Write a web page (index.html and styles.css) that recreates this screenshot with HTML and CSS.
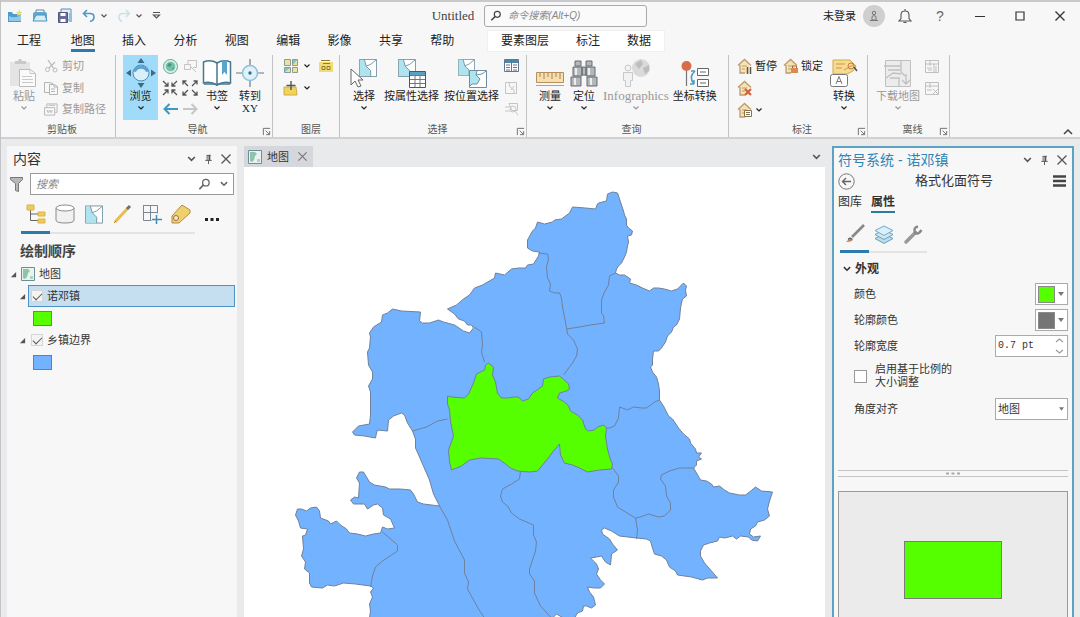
FILE: index.html
```
<!DOCTYPE html>
<html lang="zh-CN">
<head>
<meta charset="UTF-8" />
<meta name="viewport" content="width=device-width, initial-scale=1.0" />
<title>Untitled</title>
<link rel="stylesheet" href="styles.css">
</head>
<body>
<svg class="defs" width="0" height="0" aria-hidden="true">
  <symbol id="chev" viewBox="0 0 8 6"><path d="M1.5 1.5 4 4l2.5-2.5" fill="none" stroke="currentColor" stroke-width="1.2"/></symbol>
  <symbol id="close" viewBox="0 0 12 12"><path d="M1.500 1.500l9 9M10.500 1.500l-9 9" fill="none" stroke="currentColor" stroke-width="1.3"/></symbol>
  <symbol id="pin" viewBox="0 0 12 12"><path d="M4 1.500h4.500M4.500 1.500v5M2.500 7h7M6 7v4" fill="none" stroke="currentColor"/><path d="M6 1h2v6H6z" fill="currentColor"/></symbol>
  <symbol id="glass" viewBox="0 0 14 14"><circle cx="8.500" cy="5" r="3.500" fill="none" stroke="currentColor" stroke-width="1.400"/><path d="M6 7.500 1.500 12" stroke="currentColor" stroke-width="1.800"/></symbol>
  <symbol id="launch" viewBox="0 0 10 10"><path d="M1.500 9V1.500H9M4 4l4 4M8.500 4.500v4h-4" fill="none" stroke="currentColor"/></symbol>
  <symbol id="mapthumb" viewBox="0 0 14 14"><path d="M.5.5h13v13H.5z" fill="#e9f2ee" stroke="#6c8e98"/><path d="M2 2h5l2 2-2 2-1 4-2 2-2-1z" fill="#8dc2ab"/><path d="M9 9h3v3H9z" fill="#a9d5c1"/></symbol>
  <symbol id="layer" viewBox="0 0 20 20"><path d="M.5.5h19v19H.5z" fill="#fff" stroke="#6f8f9e"/><path d="M1 1h5l2 7 5 5v6H1z" fill="#aee3ef"/><path d="M6 .5 8 8l5 5v6.500M8 8l5-2 6-5" fill="none" stroke="#6f8f9e"/></symbol>
  <symbol id="tri" viewBox="0 0 8 8"><path d="M7 1v6H1z" fill="#555"/></symbol>
  <symbol id="house" viewBox="0 0 16 16"><path d="M3 6v9h9V6L7.500 2z" fill="#f4e3b5"/><path d="M1 7.500 7.500 1.500 14 7.500M3 7v8h5" fill="none" stroke="#bf9a6c" stroke-width="1.300"/><path d="M5 8h5M5 11h3" stroke="#bf9a6c"/></symbol>
</svg>

<header class="titlebar">
  <div class="quick">
    <button aria-label="新建工程"><svg width="16" height="16" viewBox="0 0 16 16"><path d="M1 4h4l1 2h8v8H1z" fill="#4e9ccb"/><path d="M2 8q6 3 12-1v6H2z" fill="#8fcae8"/><path d="M12 1l1 2.500 2.500.5L13.500 6l.5 2-2-1-2 1 .5-2L9 4l2.500-.5z" fill="#eedc77"/></svg></button>
    <button aria-label="打开"><svg width="16" height="16" viewBox="0 0 16 16"><path d="M1 6q0-2 2-2h10q2 0 2 2v7H1z" fill="#5ea8d3"/><path d="M4 4V2h8v2" fill="none" stroke="#63859b"/><path d="M4 7h9l2 6H1z" fill="#d5edf7" stroke="#4b92bd"/></svg></button>
    <button aria-label="保存"><svg width="16" height="16" viewBox="0 0 16 16"><path d="M4 4V1h10v11h-3" fill="#e1f0f7" stroke="#5892b4"/><path d="M1.500 4.500h9v10h-9z" fill="#6d6e98" stroke="#51577f"/><path d="M3.500 5h5v3h-5zM3.500 11h5v3h-5z" fill="#fff"/><path d="M12 5h3v9h-3z" fill="#8cc2dc"/></svg></button>
    <button aria-label="撤消"><svg width="14" height="14" viewBox="0 0 14 14"><path d="M5 1 1.500 4.500 5 8M2 4.500h6q4 0 4 3.500t-4 4.500" fill="none" stroke="#4f98c6" stroke-width="1.600"/></svg></button>
    <button class="drop" aria-label="撤消列表"><svg width="8" height="6"><use href="#chev"/></svg></button>
    <button aria-label="重做"><svg width="14" height="14" viewBox="0 0 14 14"><path d="M9 1l3.500 3.500L9 8M12 4.500H6q-4 0-4 3.500t3 4.500" fill="none" stroke="#c9e0ec" stroke-width="1.600"/></svg></button>
    <button class="drop" aria-label="重做列表"><svg width="8" height="6"><use href="#chev"/></svg></button>
    <button aria-label="自定义快速访问"><svg width="9" height="8" viewBox="0 0 9 8"><path d="M1 .5h7M1.500 3 4.500 6l3-3z" fill="none" stroke="#555" stroke-width="1.200"/></svg></button>
  </div>
  <div class="project">
    <span class="latin">Untitled</span>
    <label class="command"><svg width="12" height="12"><use href="#glass"/></svg><input type="text" placeholder="命令搜索(Alt+Q)" aria-label="命令搜索"></label>
  </div>
  <div class="account">
    <a href="#" class="signin">未登录</a>
    <span class="avatar"><svg width="10" height="12" viewBox="0 0 10 12"><circle cx="5" cy="3" r="1.700" fill="none" stroke="#777"/><path d="M3 10V6.500q2-2 4 0V10zM1 10.500h8" fill="none" stroke="#777"/></svg></span>
    <button aria-label="通知"><svg width="14" height="15" viewBox="0 0 14 15"><path d="M1 12h12l-2-2.500V6q0-4-4-4T3 6v3.500zM5.500 13.500h3M7 0v2" fill="none" stroke="#555" stroke-width="1.100"/></svg></button>
    <button class="help">?</button>
    <button class="win" aria-label="最小化"><svg width="10" height="10" viewBox="0 0 10 10"><path d="M0 5.500h10" stroke="#333"/></svg></button>
    <button class="win" aria-label="最大化"><svg width="10" height="10" viewBox="0 0 10 10"><path d="M1 1h8v8H1z" fill="none" stroke="#333" stroke-width="1.200"/></svg></button>
    <button class="win" aria-label="关闭"><svg width="12" height="12"><use href="#close"/></svg></button>
  </div>
</header>

<nav class="tabs">
  <a href="#" class="first">工程</a>
  <div class="core">
    <a href="#" class="on">地图</a><a href="#">插入</a><a href="#">分析</a><a href="#">视图</a><a href="#">编辑</a><a href="#">影像</a><a href="#">共享</a><a href="#">帮助</a>
  </div>
  <div class="context"><a href="#">要素图层</a><a href="#">标注</a><a href="#">数据</a></div>
</nav>

<div class="ribbon">
  <section class="group clip off">
    <div class="tools">
      <button class="big"><svg width="30" height="30" viewBox="0 0 30 30"><path d="M1 4h20v24H1z" fill="#e4e4e4"/><path d="M6 3h3q0-2 2-2t2 2h4v3H6z" fill="#c9c9c9"/><path d="M10.500 11.500h11l5 4v13h-16z" fill="#fafafa" stroke="#bbb"/><path d="M21 11.500v4h5M13 18.500h10M13 21.500h11M13 24.500h11" fill="none" stroke="#c9c9c9"/></svg>粘贴<svg width="8" height="6"><use href="#chev"/></svg></button>
      <div class="stack">
        <button><svg width="14" height="14" viewBox="0 0 14 14"><path d="M4 1l6 9M11 3 5 9" stroke="#bbb" stroke-width="1.300"/><circle cx="3.500" cy="10.500" r="2" fill="none" stroke="#bbb"/><circle cx="11" cy="11" r="2" fill="none" stroke="#bbb"/></svg>剪切</button>
        <button><svg width="14" height="14" viewBox="0 0 14 14"><path d="M5 1.500H.5v10H5M5.500 3.500h5l3 2v8h-8zM10 4v2h3M7 8h4M7 10.500h4M5 1.500l4 1" fill="none" stroke="#b5b5b5"/></svg>复制</button>
        <button><svg width="15" height="15" viewBox="0 0 15 15"><path d="M3 5V1.500h11v9h-2M.5 5.500h11v8H.5zM3 8l1.500 3L6 8l1.500 3L9 8M5 3h7" fill="none" stroke="#b5b5b5"/></svg>复制路径</button>
      </div>
    </div>
    <h2>剪贴板</h2>
  </section>
  <section class="group navi">
    <div class="tools">
      <button class="big active"><svg width="30" height="30" viewBox="0 0 30 30"><path d="M15 0l3.500 5h-7zM15 30l3.500-5h-7zM0 15l5-3.500v7zM30 15l-5-3.500v7z" fill="#3e6a89"/><circle cx="15" cy="15" r="8" fill="#d9f0fa" stroke="#4c8cb5"/><path d="M7.500 13q0-2 2-4q5.500-3 11 0q2 2 2 4q-1 1-2.500 1a5.500 5.500 0 0 0-10 0q-1.500 0-2.500-1z" fill="#5ba4d2"/></svg>浏览<svg width="8" height="6"><use href="#chev"/></svg></button>
      <div class="pairs">
        <button aria-label="全图"><svg width="15" height="15" viewBox="0 0 15 15"><circle cx="7.500" cy="7.500" r="7" fill="#dff0eb" stroke="#5baa9a"/><circle cx="7.500" cy="7.500" r="4.800" fill="#79c0ab"/><path d="M6 4l3 1-2 3-3-1zM9 9l2-1-1 3z" fill="#3f9a82"/></svg></button>
        <button aria-label="缩放至所选"><svg width="15" height="15" viewBox="0 0 15 15"><path d="M5 1.500h8.500v7H10M1.500 5.500h6v5h-6zM8 8l5 5M5 5V1.500" fill="none" stroke="#c3c3c3"/></svg></button>
        <button aria-label="固定比例放大"><svg width="16" height="16" viewBox="0 0 16 16"><path d="M1 1l5 5M6 2.500V6H2.500M15 1l-5 5M10 2.500V6h3.500M1 15l5-5M6 13.500V10H2.500M15 15l-5-5M10 13.500V10h3.500" fill="none" stroke="#555" stroke-width="1.300"/></svg></button>
        <button aria-label="固定比例缩小"><svg width="16" height="16" viewBox="0 0 16 16"><path d="M1 1l5 5M1 4.500V1h3.500M15 1l-5 5M15 4.500V1h-3.500M1 15l5-5M1 11.500V15h3.500M15 15l-5-5M15 11.500V15h-3.500" fill="none" stroke="#555" stroke-width="1.300"/></svg></button>
        <button aria-label="上一视图"><svg width="15" height="12" viewBox="0 0 15 12"><path d="M6.500 1l-5 5 5 5M2 6h13" fill="none" stroke="#3f97c2" stroke-width="2"/></svg></button>
        <button aria-label="下一视图"><svg width="15" height="12" viewBox="0 0 15 12"><path d="M8.500 1l5 5-5 5M13 6H0" fill="none" stroke="#c6c6c6" stroke-width="2"/></svg></button>
      </div>
      <button class="big"><svg width="30" height="30" viewBox="0 0 30 30"><path d="M1.500 4q7-3 13.500 1 6.500-4 13.500-1v21q-7-2-13.500 2-6.500-4-13.500-2z" fill="#fff" stroke="#47788f" stroke-width="1.500"/><path d="M15 5v22M2 26h11l2 1 2-1h11" fill="none" stroke="#47788f" stroke-width="1.500"/><path d="M20 2.500h5V17l-2.500-3L20 17z" fill="#58a6ca"/></svg>书签<svg width="8" height="6"><use href="#chev"/></svg></button>
      <button class="big goto"><svg width="30" height="30" viewBox="0 0 30 30"><path d="M15 1v6M15 23v6M1 15h6M23 15h6" stroke="#777" stroke-width="1.200"/><circle cx="15" cy="15" r="7.500" fill="#dff2fa" stroke="#8dc0da" stroke-width="1.500"/><circle cx="15" cy="15" r="1.700" fill="#2f6f97"/></svg>转到<span class="latin">XY</span></button>
    </div>
    <h2>导航</h2><button class="launch" aria-label="导航选项"><svg width="9" height="9"><use href="#launch"/></svg></button>
  </section>
  <section class="group lay">
    <div class="tools">
      <div class="stack">
        <button><svg width="16" height="16" viewBox="0 0 16 16"><path d="M1.500 1.500h6v6h-6zM9.500 1.500h5v6h-5zM1.500 9.500h6v5h-6zM9.500 9.500h5v5h-5z" fill="#efe19a" stroke="#8a9c94"/><path d="M10 2h4l-4 5zM2 10h5l-5 4z" fill="#7fc3d3"/></svg><svg width="8" height="6"><use href="#chev"/></svg></button>
        <button><svg width="16" height="16" viewBox="0 0 16 16"><path d="M1 7h12l1 8H1z" fill="#f0d35a" stroke="#cfae45"/><path d="M8 1v9M3.500 5.500h9" stroke="#555" stroke-width="1.400"/></svg><svg width="8" height="6"><use href="#chev"/></svg></button>
      </div>
      <div class="stack">
        <button aria-label="添加图形图层"><svg width="16" height="16" viewBox="0 0 16 16"><path d="M1 4h14v10H1z" fill="#f2db72"/><path d="M3 2.500h9M4 8.500h3v3H4zM9 8.500h3v3H9zM5 5.500h7" fill="none" stroke="#8f7f36"/></svg></button>
      </div>
    </div>
    <h2>图层</h2>
  </section>
  <section class="group sel">
    <div class="tools">
      <button class="big"><svg width="30" height="30" viewBox="0 0 30 30"><use href="#layer" x="10" y="1" width="18" height="18"/><path d="M2 11v16l4-4 3 6 3-1-3-6h5z" fill="#fff" stroke="#666"/></svg>选择<svg width="8" height="6"><use href="#chev"/></svg></button>
      <button class="big"><svg width="30" height="30" viewBox="0 0 30 30"><use href="#layer" x="1" y="1" width="18" height="18"/><path d="M12.500 13.500h16v16h-16z" fill="#fff" stroke="#555"/><path d="M13 14h15v3H13z" fill="#5ba0c4"/><path d="M13 17.500h15M13 21.500h15M13 25.500h15M18 17v12M23 17v12" stroke="#777"/></svg>按属性选择</button>
      <button class="big"><svg width="30" height="30" viewBox="0 0 30 30"><use href="#layer" x="1" y="1" width="17" height="17"/><path d="M12.500 12.500h17v17h-17z" fill="#fff" stroke="#6f8f9e"/><path d="M13 13h7l-1 4 4 4-3 5h-5l-2 2z" fill="#aee3ef"/><path d="M20 13l-1 4 4 4-3 5h-5l-2 2M19 17l6-1 4-3" fill="none" stroke="#6f8f9e"/></svg>按位置选择</button>
      <div class="stack">
        <button aria-label="属性"><svg width="15" height="13" viewBox="0 0 15 13"><path d="M.5.5h14v12H.5z" fill="#fff" stroke="#64748a"/><path d="M1 1h13v3H1z" fill="#4e84a5"/><path d="M7.500 1v11M2 6h4M9 6h4M2 8.500h4M9 8.500h4M2 11h4M9 11h4" stroke="#64748a"/></svg></button>
        <button aria-label="清除"><svg width="14" height="14" viewBox="0 0 14 14"><path d="M1.500 1.500h11v11h-11zM5 2l1 4 4 3v3M7 9l3-4" fill="none" stroke="#c5c5c5"/></svg></button>
        <button aria-label="缩放至"><svg width="15" height="15" viewBox="0 0 15 15"><path d="M5 1.500h8.500v7H8zM1 5h6M1 9h5" fill="none" stroke="#c5c5c5"/><circle cx="9" cy="7" r="3" fill="none" stroke="#c5c5c5"/><path d="M11 9l3 4" stroke="#c5c5c5"/></svg></button>
      </div>
    </div>
    <h2>选择</h2><button class="launch" aria-label="选择选项"><svg width="9" height="9"><use href="#launch"/></svg></button>
  </section>
  <section class="group query">
    <div class="tools">
      <button class="big"><svg width="30" height="30" viewBox="0 0 30 30"><path d="M1.500 14.500h27v10h-27z" fill="#f6e0ae" stroke="#b78e5e"/><path d="M5 15v4M9 15v6M13 15v4M17 15v6M21 15v4M25 15v6" stroke="#a8825a"/><path d="M1 27.500h28" stroke="#83b0c6"/></svg>测量<svg width="8" height="6"><use href="#chev"/></svg></button>
      <button class="big"><svg width="30" height="30" viewBox="0 0 30 30"><path d="M6 3h6v5H6zM17 3h6v5h-6zM4 9h9v9H4zM17 9h9v9h-9zM2 19h10v9H2zM18 19h10v9H18zM13 9h4v8h-4z" fill="#b4b8bb" stroke="#666b70"/><path d="M6 20v7M22 20v7M7 10v7M20 10v7" stroke="#eee" stroke-width="2"/></svg>定位<svg width="8" height="6"><use href="#chev"/></svg></button>
      <button class="big off info"><svg width="30" height="30" viewBox="0 0 30 30"><circle cx="20" cy="10" r="9" fill="#dadada"/><path d="M14 6l6-4 2 4-4 5zM22 10l6-3v6l-4 3z" fill="#bdbdbd"/><circle cx="7" cy="10" r="3" fill="#f2f2f2" stroke="#c8c8c8"/><path d="M2.500 14.500h9v8h-2v6h-5v-6h-2z" fill="#f2f2f2" stroke="#c8c8c8"/></svg><span class="latin">Infographics</span><svg width="8" height="6"><use href="#chev"/></svg></button>
      <button class="big"><svg width="30" height="30" viewBox="0 0 30 30"><path d="M6.500 10v18" stroke="#777" stroke-width="1.200"/><circle cx="6.500" cy="8" r="5" fill="#d96c4a"/><path d="M17.500 10.500h11v7h-11zM17.500 21.500h11v7h-11zM20 14h6M20 25h6" fill="#fff" stroke="#666"/><path d="M15 13q-7 6-1 13M15 13l-4 0M14 26v-4M14 26h-4" fill="none" stroke="#4a9bc6" stroke-width="1.500"/></svg>坐标转换</button>
    </div>
    <h2>查询</h2>
  </section>
  <section class="group label">
    <div class="tools">
      <div class="houses">
        <button><svg width="16" height="16"><use href="#house"/><path d="M10.500 9v7M13.500 9v7" stroke="#555" stroke-width="1.500"/></svg>暂停</button>
        <button><svg width="16" height="16"><use href="#house"/><path d="M8 10h7v5H8z" fill="#d98a4e"/><path d="M9.500 10V8h4v2" fill="none" stroke="#a06a3e"/></svg>锁定</button>
        <button aria-label="查看未放置的"><svg width="16" height="16"><use href="#house"/><path d="M8 9l6 6M14 9l-6 6" stroke="#d65b3c" stroke-width="2"/></svg></button>
        <span></span>
        <button aria-label="更多标注"><svg width="16" height="16"><use href="#house"/><path d="M7.500 8.500h7v6h-7zM9 10.500h4M9 12.500h4" fill="#fff" stroke="#80714f"/></svg><svg width="8" height="6"><use href="#chev"/></svg></button>
      </div>
      <button class="big"><svg width="30" height="30" viewBox="0 0 30 30"><path d="M4 2h17l6 6-3 5-6 3H4z" fill="#f6dc8d" stroke="#d1a94f"/><path d="M7 6h9M7 10h6M15 12l9-5" stroke="#cf8f62"/><circle cx="22" cy="8" r="3" fill="none" stroke="#d0754b"/><path d="M25 9l3 4" stroke="#555" stroke-width="1.500"/><rect x="1.500" y="16.500" width="17" height="12" rx="2" fill="#fff" stroke="#777"/><path d="M7 26l3-7.500 3 7.500M8 23.500h4" fill="none" stroke="#777"/></svg>转换<svg width="8" height="6"><use href="#chev"/></svg></button>
    </div>
    <h2>标注</h2><button class="launch" aria-label="标注选项"><svg width="9" height="9"><use href="#launch"/></svg></button>
  </section>
  <section class="group offline off">
    <div class="tools">
      <button class="big"><svg width="30" height="30" viewBox="0 0 30 30"><path d="M2.500 2.500h25v26h-25z" fill="#ececec" stroke="#c0c0c0"/><path d="M1 8h17M5 12h12M18 3v11l4 4M3 20l7-5 8 1M7 20h9v8M23 16v10M19 22l4 4 4-4" fill="none" stroke="#c0c0c0" stroke-width="1.300"/></svg>下载地图<svg width="8" height="6"><use href="#chev"/></svg></button>
      <div class="stack">
        <button aria-label="同步"><svg width="15" height="15" viewBox="0 0 15 15"><path d="M.5 1.500h13v12H.5zM1 5h12M5 2v5M9 5v8M2 9h5M11 7v6M3 11h4" fill="none" stroke="#bfbfbf"/></svg></button>
        <button aria-label="移除"><svg width="15" height="15" viewBox="0 0 15 15"><path d="M.5 1.500h13v12H.5zM1 5h12M5 2v5M2 9h5M8 8l5 5M13 8l-5 5" fill="none" stroke="#bfbfbf"/></svg></button>
      </div>
    </div>
    <h2>离线</h2><button class="launch" aria-label="离线选项"><svg width="9" height="9"><use href="#launch"/></svg></button>
  </section>
  <button class="collapse" aria-label="折叠功能区"><svg width="10" height="7" viewBox="0 0 10 7"><path d="M1 6l4-4 4 4" fill="none" stroke="#444" stroke-width="1.500"/></svg></button>
</div>

<main class="workspace">
  <aside class="contents">
    <div class="panehead"><h1>内容</h1><span class="paneicons"><button aria-label="菜单"><svg width="11" height="8"><use href="#chev"/></svg></button><button aria-label="固定"><svg width="11" height="11"><use href="#pin"/></svg></button><button aria-label="关闭"><svg width="12" height="12"><use href="#close"/></svg></button></span></div>
    <div class="find">
      <svg width="13" height="15" viewBox="0 0 13 15"><path d="M.5.5h12v2l-4 4v8l-3-1V6.500l-5-4z" fill="#b8b8b8" stroke="#777"/></svg>
      <label class="findbox"><input type="text" placeholder="搜索" aria-label="搜索"><svg width="13" height="13"><use href="#glass"/></svg><svg width="10" height="8"><use href="#chev"/></svg></label>
    </div>
    <div class="views">
      <button class="on" aria-label="按绘制顺序列出"><svg width="20" height="20" viewBox="0 0 20 20"><path d="M4.500 6v10.500H13M4.500 10H13" fill="none" stroke="#666"/><path d="M1 1h7v5H1zM12 8h7v4h-7zM12 15h7v4h-7z" fill="#efcb5a" stroke="#d9b54a"/></svg></button>
      <button aria-label="按数据源列出"><svg width="20" height="20" viewBox="0 0 20 20"><path d="M1 4v12q0 3 9 3t9-3V4" fill="#f1f1f1" stroke="#8b8b8b"/><ellipse cx="10" cy="4" rx="9" ry="3" fill="#fff" stroke="#8b8b8b"/></svg></button>
      <button aria-label="按选择列出"><svg width="18" height="19"><use href="#layer"/></svg></button>
      <button aria-label="按编辑列出"><svg width="20" height="20" viewBox="0 0 20 20"><path d="M2 18 14.500 4.500" stroke="#e7bd4f" stroke-width="3"/><path d="M14 5l3-3" stroke="#776d65" stroke-width="3"/><path d="M1 19l2-2" stroke="#a88244"/></svg></button>
      <button aria-label="按捕捉列出"><svg width="20" height="20" viewBox="0 0 20 20"><path d="M1 1.500h14.500v8M1.500 1v15.500h8M8.500 1v15M1 8.500h15" fill="none" stroke="#7b8794"/><path d="M14.500 11v9M10 15.500h10" stroke="#3f8eb5" stroke-width="1.500"/></svg></button>
      <button aria-label="按标注列出"><svg width="20" height="20" viewBox="0 0 20 20"><path d="M1 12 11 1l8 5v3L8 19H1z" fill="#efd06d" stroke="#b28b4b"/><circle cx="5" cy="14" r="2.500" fill="#f8eac0" stroke="#a66a4a"/></svg></button>
      <button class="more" aria-label="更多"><svg width="16" height="4" viewBox="0 0 16 4"><path d="M1 1h3v3H1zM6.500 1h3v3h-3zM12 1h3v3h-3z" fill="#222"/></svg></button>
    </div>
    <h3>绘制顺序</h3>
    <ul class="tree">
      <li><svg width="7" height="7"><use href="#tri"/></svg><svg width="14" height="14"><use href="#mapthumb"/></svg>地图</li>
      <li class="sub"><svg width="7" height="7"><use href="#tri"/></svg><label class="picked"><input type="checkbox" checked>诺邓镇</label></li>
      <li class="leaf"><span class="swatch green"></span></li>
      <li class="sub"><svg width="7" height="7"><use href="#tri"/></svg><label><input type="checkbox" checked>乡镇边界</label></li>
      <li class="leaf"><span class="swatch blue"></span></li>
    </ul>
  </aside>

  <section class="view">
    <div class="doctabs"><div class="doctab"><svg width="14" height="14"><use href="#mapthumb"/></svg>地图<button aria-label="关闭地图"><svg width="11" height="11"><use href="#close"/></svg></button></div><button aria-label="视图列表"><svg width="11" height="8"><use href="#chev"/></svg></button></div>
    <svg class="map" viewBox="244 167 582 450" preserveAspectRatio="xMidYMin slice">
      <g stroke="#6f819b" stroke-width="1" stroke-linejoin="round" fill="none">
        <path fill="#73b2ff" d="M608 194L613 192 618 193 620 199 622 205 624 211 625 215 627 219 627 225 629 228 633 231 632 235 628 236 629 242 628 246 627 252 625 257 622 263 619 266 617 269 616 273 620 275 625 275 631 279 630 283 637 285 643 288 650 291 654 288 659 288 665 289 672 291 678 289 680 287 684 283 687 286 686 290 687 296 683 299 682 303 681 308 680 319 677 325 674 327 672 332 668 336 666 342 662 348 659 351 654 351 653 359 653 365 651 367 653 372 657 377 659 384 660 391 660 400 664 406 669 416 673 419 679 428 684 434 690 439 691 443 696 449 697 453 702 453 699 457 702 459 697 461 697 465 694 468 697 473 701 480 707 481 712 484 714 487 720 486 725 490 730 493 740 495 746 495 750 492 756 487 762 491 773 492 770 501 768 509 770 516 765 520 758 522 756 526 751 529 750 534 754 537 761 536 758 541 752 540 749 537 741 536 737 539 733 536 725 538 720 537 718 541 710 543 704 545 701 551 701 556 705 563 712 571 718 578 708 578 703 580 692 577 678 575 676 571 670 567 667 560 662 556 655 554 653 548 651 541 647 539 637 538 620 536 612 531 605 528 602 530 603 534 610 539 613 544 618 550 612 554 611 565 606 562 602 556 597 557 591 558 597 564 599 569 597 574 601 580 605 584 601 588 595 588 588 587 590 592 594 597 596 605 592 608 587 606 584 606 583 611 578 613 575 618 L564 618 557 614 553 618 L370 618 371 611 370 604 373 597 371 592 374 588 371 586 356 584 344 583 335 586 328 585 323 588 312 587 310 583 310 573 305 569 306 562 302 556 304 549 303 536 306 535 308 529 301 528 299 521 296 515 298 509 302 509 307 511 311 508 317 507 320 511 321 518 329 521 331 524 337 521 341 525 347 529 350 533 358 534 366 536 374 534 381 533 383 527 388 529 395 528 391 519 384 515 383 508 378 504 374 505 368 509 365 504 354 504 351 500 355 497 359 498 360 483 357 478 360 472 364 472 370 482 375 485 386 487 390 489 401 489 411 490 414 494 418 502 424 504 440 506 434 494 430 480 420 457 416 448 416 439 413 431 408 423 405 415 402 413 394 416 389 420 388 431 378 430 377 433 376 438 365 436 355 435 353 432 359 426 370 424 371 415 371 410 371 392 369 386 373 379 373 372 369 365 368 352 370 348 371 337 370 333 374 327 382 322 383 315 388 313 393 309 402 311 421 312 420 321 423 323 430 323 439 320 444 322 455 325 464 331 470 333 474 328 472 325 468 325 465 321 459 319 455 314 448 309 457 305 464 299 470 295 475 288 483 285 495 278 496 273 505 275 512 269 519 268 526 268 528 265 534 264 539 256 540 252 533 251 528 248 528 240 533 231 536 228 538 222 545 224 553 222 555 220 562 219 570 213 573 207 586 208 596 209 598 204 599 203 607 201z"/>
        <path d="M539 253L548 254 549 259 547 267 548 278 551 284 550 291 555 293 560 293 562 298 563 307 565 317 567 328 568 334 574 340 578 349 577 356 573 363 564 375M567 329L580 327 591 325 605 323 604 316 602 313 602 300 605 292 609 285 610 276 616 273M475 327L482 332 483 345 482 352 485 362M660 400L655 402 647 408 642 408 634 407 628 410 623 408 620 407 619 418 615 426 610 428 605 428M695 468L680 468 670 471 662 475 661 479 666 486 667 496 671 503 671 510 665 516 659 517 649 514 641 517 636 518 626 512 618 507 614 497 614 490 619 482 619 476 613 468M636 518L638 530 637 539M521 471L520 479 512 484 503 489 501 496 503 502 508 506 512 513 520 519 534 525 534 535 537 542 536 551 530 569 530 574 535 581 535 593 541 606 552 618M448 419L438 421 427 427 413 431M440 506L448 520 455 541 465 560 465 573 469 582 468 589 479 609 485 618M383 532L390 538 398 545 398 551 383 561 376 567 373 576 371 587"/>
        <path fill="#55ff00" d="M448 396L452 397 465 398 469 394 474 383 477 374 485 370 486 365 489 363 494 367 493 375 496 382 498 393 502 398 508 398 515 397 519 397 523 401 529 399 533 393 539 389 543 386 544 379 550 377 560 376 565 380 569 384 570 389 567 391 560 393 558 398 565 402 569 406 571 411 578 415 583 420 586 429 589 431 595 430 598 427 604 425 607 428 606 436 608 449 611 460 613 464 612 469 600 470 588 472 580 468 573 465 565 463 561 455 560 444 554 451 548 459 543 465 538 471 530 472 518 471 511 468 506 464 499 459 481 458 470 460 462 466 452 470 450 462 449 450 454 436 451 422 450 410 448 404z"/>
      </g>
    </svg>
  </section>

  <aside class="symbology">
    <div class="panehead"><h1>符号系统 - 诺邓镇</h1><span class="paneicons"><button aria-label="菜单"><svg width="11" height="8"><use href="#chev"/></svg></button><button aria-label="固定"><svg width="11" height="11"><use href="#pin"/></svg></button><button aria-label="关闭"><svg width="12" height="12"><use href="#close"/></svg></button></span></div>
    <div class="format"><button aria-label="返回"><svg width="17" height="17" viewBox="0 0 17 17"><circle cx="8.500" cy="8.500" r="7.700" fill="none" stroke="#777"/><path d="M8 5 4.500 8.500 8 12M5 8.500h8" fill="none" stroke="#666" stroke-width="1.400"/></svg></button><span>格式化面符号</span><button aria-label="选项"><svg width="13" height="12" viewBox="0 0 13 12"><path d="M0 1.500h13M0 6h13M0 10.500h13" stroke="#444" stroke-width="2.500"/></svg></button></div>
    <div class="symtabs"><a href="#">图库</a><a href="#" class="on">属性</a></div>
    <div class="parts">
      <button class="on" aria-label="符号"><svg width="20" height="20" viewBox="0 0 20 20"><path d="M7 13 19 1" stroke="#888" stroke-width="2.600"/><path d="M1 18q2-1 2-3 2-3 5 0 0 3-7 3z" fill="#bd8660"/><path d="M3 15q2-2 4 0" stroke="#555" fill="none"/></svg></button>
      <button aria-label="图层"><svg width="20" height="20" viewBox="0 0 20 20"><path d="M10 9l9 4.500-9 5-9-5z" fill="#b7dff0" stroke="#6e9db6"/><path d="M10 5l9 4.500-9 5-9-5z" fill="#cfeaf6" stroke="#6e9db6"/><path d="M10 1l9 4.500-9 5-9-5z" fill="#d9eff9" stroke="#6fa9c8"/></svg></button>
      <button aria-label="结构"><svg width="20" height="20" viewBox="0 0 20 20"><path d="M3 17 12.500 7.500" stroke="#999" stroke-width="3.500" stroke-linecap="round"/><path d="M15 1.500q-5 1-3 6 3 3 6.500-2.500" fill="none" stroke="#888" stroke-width="2.500"/></svg></button>
    </div>
    <h4><svg width="10" height="8"><use href="#chev"/></svg>外观</h4>
    <div class="fields">
      <div class="field"><span id="fill">颜色</span><button class="color" aria-labelledby="fill"><span class="chip green"></span><svg width="6" height="4" viewBox="0 0 6 4"><path d="M0 0h6L3 4z" fill="#777"/></svg></button></div>
      <div class="field"><span id="line">轮廓颜色</span><button class="color" aria-labelledby="line"><span class="chip gray"></span><svg width="6" height="4" viewBox="0 0 6 4"><path d="M0 0h6L3 4z" fill="#777"/></svg></button></div>
      <div class="field"><label for="width">轮廓宽度</label><span class="spin"><input id="width" type="text" value="0.7 pt"><svg width="9" height="18" viewBox="0 0 9 18"><path d="M1 5l3.500-3L8 5M1 13l3.500 3L8 13" fill="none" stroke="#999" stroke-width="1.200"/></svg></span></div>
      <label class="scale"><input type="checkbox"><span>启用基于比例的<br>大小调整</span></label>
      <div class="field"><label for="angle">角度对齐</label><span class="pick"><select id="angle"><option>地图</option></select><svg width="5" height="4" viewBox="0 0 6 4"><path d="M0 0h6L3 4z" fill="#777"/></svg></span></div>
    </div>
    <div class="splitter"><svg width="16" height="3" viewBox="0 0 16 3"><path d="M1 1.500h3M6.500 1.500h3M12 1.500h3" stroke="#aaa" stroke-width="2"/></svg></div>
    <div class="preview"><div class="patch"></div></div>
  </aside>
</main>
</body>
</html>
```

FILE: styles.css
```
*{box-sizing:border-box;}
body{margin:0;height:100vh;display:flex;flex-direction:column;overflow:hidden;background:#f7f7f7;border-top:2px solid #c9c9cb;border-left:1px solid #c4c4c6;font:11px/14px "Liberation Sans","Noto Sans CJK SC",sans-serif;color:#333;}
button{display:flex;align-items:center;justify-content:center;padding:0;border:0;background:none;font:inherit;color:inherit;white-space:nowrap;}
a{color:inherit;text-decoration:none;}
svg{display:block;flex:none;}
h1,h2,h3,h4,ul{margin:0;padding:0;font-weight:normal;}
input,select{font:inherit;color:inherit;min-width:0;}
.defs{position:absolute;}
.latin{font-family:"Liberation Serif",serif;}

.titlebar{display:grid;grid-template-columns:1fr auto 1fr;align-items:center;height:28px;padding:0 12px 0 6px;flex:none;}
.quick{display:flex;align-items:center;gap:9px;color:#555;}
.quick .drop{margin-left:-5px;}
.project{display:flex;align-items:center;gap:10px;padding-left:4px;font-size:13px;color:#444;}
.command{display:flex;align-items:center;gap:6px;width:163px;height:22px;padding:0 5px;border:1px solid #a9a9ab;border-radius:3px;background:#fafafa;}
.command input{width:130px;padding:0;border:0;outline:0;background:none;font-size:10px;font-style:italic;}
input::placeholder{color:#888;opacity:1;}
.account{display:flex;align-items:center;justify-content:flex-end;}
.signin{margin-right:7px;color:#222;}
.avatar{display:flex;align-items:center;justify-content:center;width:22px;height:22px;margin-right:13px;border-radius:50%;background:#cfcfcf;}
.help{width:16px;margin:0 12px 0 20px;font-size:14px;color:#666;}
.win{width:40px;}
.win:last-child{width:16px;margin-left:12px;}

.tabs{display:flex;align-items:stretch;height:22px;flex:none;font-size:12px;color:#222;}
.tabs a{display:flex;align-items:center;justify-content:center;}
.tabs .first{width:56px;}
.core{display:grid;grid-template-columns:repeat(8,1fr);width:411px;}
.core .on{justify-self:center;border-bottom:3px solid #2d7aac;border-top:3px solid transparent;}
.context{display:flex;gap:27px;margin-left:19px;padding:0 13px;background:#fff;border:1px solid #f0f0f0;}

.ribbon{display:flex;height:87px;padding-top:3px;border-bottom:2px solid #d0d0d2;flex:none;}
.group{position:relative;display:flex;flex-direction:column;flex:none;border-right:1px solid #c2c2c2;color:#222;}
.group h2{margin-top:auto;font-size:10px;line-height:15px;text-align:center;color:#555;}
.tools{display:flex;height:65px;}
.big{flex-direction:column;justify-content:flex-start;padding-top:3px;height:65px;}
.big>svg:first-child{margin-bottom:1px;}
.big>svg:last-child:not(:first-child){margin-top:2px;}
.big .latin{font-size:13px;}
.goto .latin{font-size:11px;line-height:11px;}
.off,.off .big{color:#999;}
.active{width:35px;background:#a0dcfa;}
.stack{display:flex;flex-direction:column;}
.stack button{justify-content:flex-start;gap:4px;height:22px;}
.launch{position:absolute;right:1px;bottom:1px;color:#666;}
.clip{width:115px;padding-left:8px;}
.clip .tools{gap:5px;}
.clip .big{width:30px;}
.clip .stack svg{width:14px;}
.navi{width:157px;padding-left:7px;}
.navi .tools{gap:3px;}
.pairs{display:grid;grid-template-columns:18px 18px;grid-template-rows:22px 22px 20px;column-gap:2px;}
.lay{width:67px;padding-left:10px;}
.lay .tools{gap:7px;}
.sel{width:187px;padding-left:9px;}
.sel .tools{gap:5px;}
.query{width:202px;padding-left:8px;}
.query .tools{gap:4px;}
.label{width:139px;padding-left:8px;}
.label .tools{gap:4px;}
.houses{display:grid;grid-template-columns:42px 42px;grid-template-rows:22px 22px 22px;column-gap:4px;}
.houses button{justify-content:flex-start;gap:2px;}
.offline{width:82px;padding-left:8px;}
.offline .tools{gap:5px;}
.collapse{margin-left:auto;align-self:flex-end;padding:0 7px 2px 0;}

.workspace{display:flex;flex:1;min-height:0;gap:7px;padding:7px 6px 0;background:#e9eaec;}
.contents{display:flex;flex-direction:column;width:230px;flex:none;background:#f7f7f7;}
.panehead{display:flex;align-items:center;justify-content:space-between;height:26px;padding:0 5px 0 6px;flex:none;}
.panehead h1{font-size:14px;line-height:20px;color:#333;}
.paneicons{display:flex;align-items:center;gap:6px;color:#555;}
.find{display:flex;align-items:center;gap:7px;height:24px;padding:0 3px;}
.findbox{display:flex;flex:1;align-items:center;gap:8px;height:22px;padding:0 4px 0 5px;border:1px solid #999;background:#fff;color:#666;}
.findbox input{flex:1;padding:0;border:0;outline:0;font-style:italic;}
.views{display:flex;align-items:flex-start;height:38px;margin:7px 0 0 14px;}
.views button{width:29px;height:31px;padding-bottom:7px;border-bottom:2px solid #e3e3e3;}
.views .on,.parts .on{border-bottom:3px solid #2d7aac;}
.views .more{width:34px;padding-bottom:0;border:0;}
.contents h3{height:20px;margin:0 0 2px 13px;font-size:14px;line-height:20px;font-weight:bold;color:#444;}
.tree{list-style:none;}
.tree li{display:flex;align-items:center;gap:4px;height:22px;padding:0 2px 0 3px;}
.tree .sub{padding-left:12px;gap:2px;}
.tree label{display:flex;align-items:center;gap:4px;flex:1;height:22px;padding-left:2px;border:1px solid transparent;}
.tree .picked{border-color:#4e92c4;background:#c5def0;}
.tree .leaf{padding-left:26px;}
.swatch{width:19px;height:15px;border:1px solid #6e7f8c;}
.green{background:#55ff00;}
.blue{background:#73b2ff;}
.gray{background:#757575;}
input[type=checkbox]{appearance:none;display:flex;justify-content:center;width:12px;height:12px;margin:0;flex:none;background:#f3f3f3;border:1px solid #d5d5d5;}
input[type=checkbox]:checked::after{content:"";width:4px;height:8px;border:solid #555;border-width:0 1px 1px 0;transform:rotate(45deg);}

.view{display:flex;flex-direction:column;flex:1;min-width:0;}
.doctabs{display:flex;align-items:center;justify-content:space-between;height:21px;padding-right:3px;flex:none;color:#555;}
.doctab{display:flex;align-items:center;gap:5px;height:21px;padding:0 5px 0 4px;background:#d6d7dc;color:#333;}
.doctab button{margin-left:3px;color:#777;}
.map{flex:1;width:100%;min-height:0;background:#fff;}

.symbology{display:flex;flex-direction:column;width:242px;flex:none;border:solid #5ba3c0;border-width:2px 2px 0;padding:0 4px;background:#f7f7f7;}
.symbology .panehead{height:24px;padding:0;}
.symbology h1{color:#2e86b8;}
.format{display:flex;align-items:center;justify-content:space-between;height:18px;font-size:13px;padding-right:2px;flex:none;}
.symtabs{display:flex;gap:9px;height:24px;font-size:12px;flex:none;}
.symtabs a{height:23px;line-height:25px;}
.symtabs .on{font-weight:bold;border-bottom:2px solid #2a7f98;}
.parts{display:flex;margin:8px 0 0 2px;flex:none;}
.parts button{width:29px;height:31px;padding-bottom:4px;border-bottom:2px solid #e3e3e3;}
.symbology h4{display:flex;align-items:center;gap:3px;height:28px;margin-left:4px;padding-top:4px;font-size:12px;font-weight:bold;flex:none;}
.fields{display:flex;flex-direction:column;padding-left:16px;}
.field{display:flex;align-items:center;justify-content:space-between;height:26px;}
.color{justify-content:space-between;width:33px;height:22px;padding:0 3px 0 2px;border:1px solid #aaa;background:#fff;}
.chip{width:17px;height:17px;border:1px solid #8b8b8b;}
.spin,.pick{display:flex;align-items:center;width:73px;height:22px;padding-right:3px;border:1px solid #aaa;background:#fff;}
.spin input,.pick select{flex:1;width:0;padding:0 2px;border:0;outline:0;background:none;appearance:none;}
.spin input{font-family:"Liberation Mono",monospace;font-size:10px;}
.scale{display:flex;align-items:center;gap:8px;height:34px;margin-bottom:3px;line-height:13px;}
.scale input[type=checkbox]{width:13px;height:13px;background:#fff;border-color:#999;}
.splitter{display:flex;justify-content:center;height:7px;margin-top:auto;border:solid #c4c4c4;border-width:1px 0;padding-top:1px;flex:none;}
.preview{height:126px;margin-top:14px;padding-top:49px;border:1px solid #999;border-bottom:0;background:#ebebeb;flex:none;}
.patch{width:98px;height:58px;margin:0 auto;background:#55ff00;border:1px solid #7b7b7b;}
```
